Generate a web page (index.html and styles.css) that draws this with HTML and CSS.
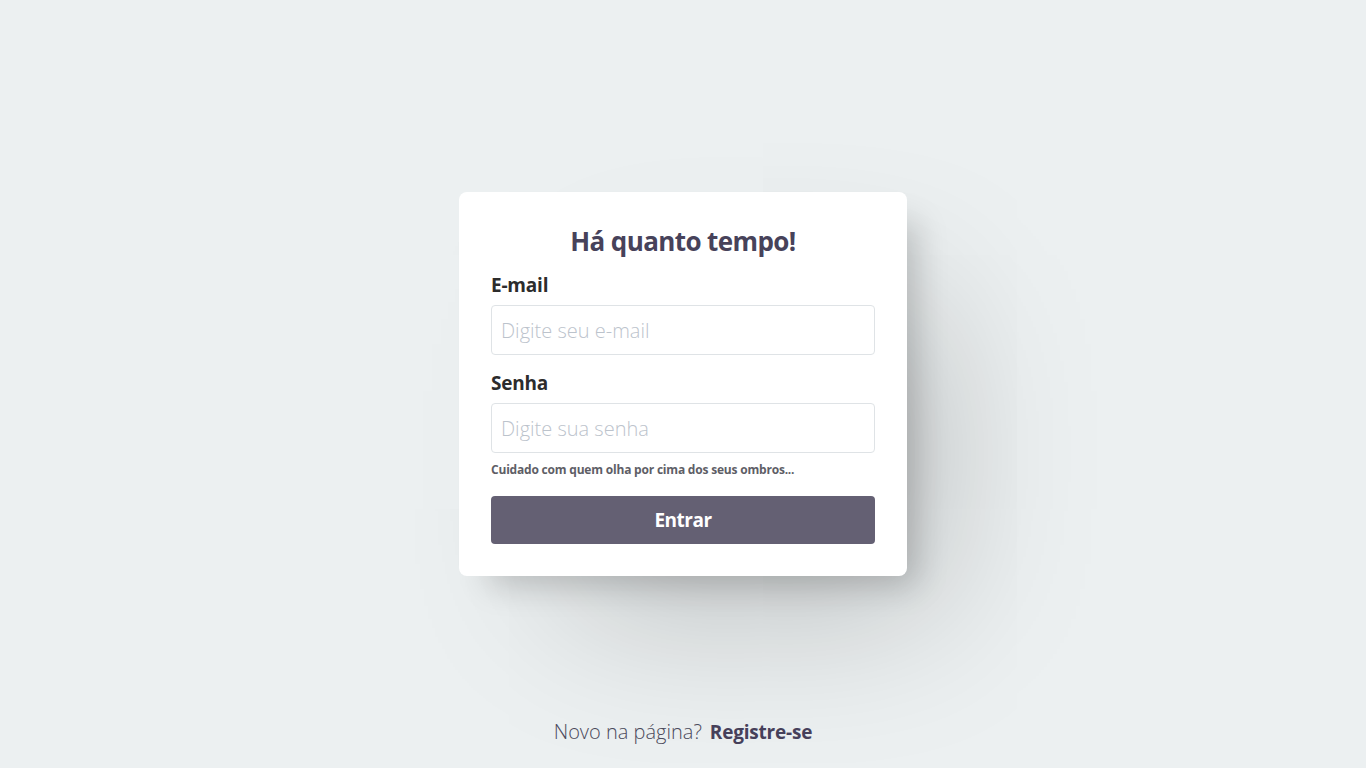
FILE: index.html
```html
<!DOCTYPE html>
<html lang="pt-BR">
<head>
<meta charset="utf-8">
<title>Login</title>
<link rel="stylesheet" href="styles.css">
</head>
<body>
<div class="page">
  <div class="spacer"></div>
  <form class="card">
    <h1 class="title">Há quanto tempo!</h1>
    <label class="label" for="email">E-mail</label>
    <input class="input" id="email" type="email" placeholder="Digite seu e-mail">
    <label class="label label-gap" for="senha">Senha</label>
    <input class="input" id="senha" type="password" placeholder="Digite sua senha">
    <p class="hint">Cuidado com quem olha por cima dos seus ombros...</p>
    <button class="btn" type="button">Entrar</button>
  </form>
  <footer class="footer">
    <span class="footer-text">Novo na página?</span>
    <a class="footer-link" href="#">Registre-se</a>
  </footer>
</div>
</body>
</html>
```

FILE: styles.css
```css
* { box-sizing: border-box; }
html, body { margin: 0; padding: 0; }
body {
  background: #ecf0f1;
  font-family: "Open Sans", "Noto Sans", sans-serif;
}
.page {
  height: 100vh;
  display: grid;
  grid-template-rows: 1fr auto 1fr;
  justify-items: center;
}
.card {
  width: 448px;
  background: #ffffff;
  border-radius: 8px;
  padding: 32px;
  display: flex;
  flex-direction: column;
  box-shadow:
    20px 20px 30px -10px rgba(0, 0, 0, 0.18),
    70px 70px 160px -40px rgba(0, 0, 0, 0.22);
}
.title {
  margin: 0;
  text-align: center;
  font-size: 26px;
  line-height: 34px;
  font-weight: 700;
  letter-spacing: -0.6px;
  color: #47425a;
}
.label {
  margin-top: 15px;
  font-size: 19px;
  line-height: 24px;
  font-weight: 700;
  letter-spacing: -0.2px;
  color: #2c2c2c;
}
.label-gap { margin-top: 16px; }
.input {
  margin-top: 8px;
  height: 50px;
  border: 1px solid #dfe3e6;
  border-radius: 4px;
  padding: 0 9px;
  font-family: inherit;
  font-size: 20px;
  font-weight: 300;
  color: #333;
  outline: none;
}
.input::placeholder { color: #bcc3cc; }
.hint {
  margin: 9px 0 0;
  font-size: 12px;
  line-height: 16px;
  font-weight: 700;
  letter-spacing: -0.2px;
  color: #5e5e66;
}
.btn {
  margin-top: 18px;
  height: 48px;
  border: 0;
  border-radius: 4px;
  background: #646073;
  color: #ffffff;
  font-family: inherit;
  font-size: 19px;
  font-weight: 700;
  letter-spacing: -0.5px;
}
.footer {
  align-self: end;
  padding-bottom: 24px;
  font-size: 20px;
  line-height: 24px;
  display: flex;
  gap: 8px;
}
.footer-text { color: #4b4a5c; font-weight: 300; }
.footer-link { color: #46405a; font-weight: 700; font-size: 19px; letter-spacing: -0.2px; text-decoration: none; }
```
